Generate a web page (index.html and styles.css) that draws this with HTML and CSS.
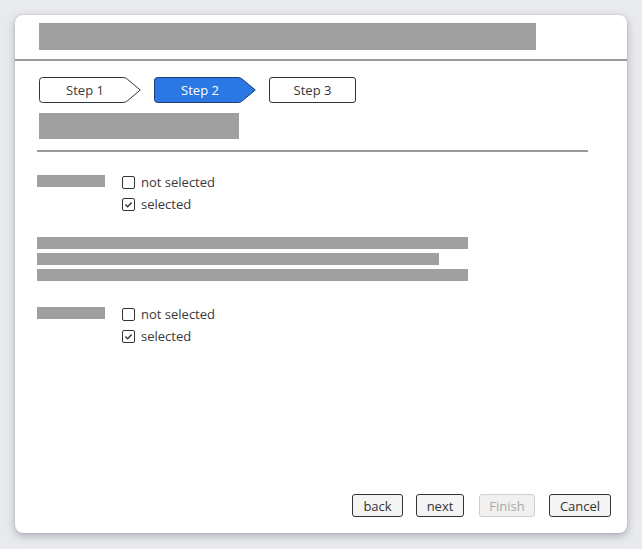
FILE: index.html
```html
<!DOCTYPE html>
<html>
<head>
<meta charset="utf-8">
<link rel="stylesheet" href="styles.css">
</head>
<body>
<div class="window">
  <div class="header">
    <div class="bar title-bar"></div>
  </div>
  <div class="content">
    <div class="steps">
      <div class="step arrow">
        <svg class="step-bg" viewBox="0 0 102 26" width="102" height="26"><path d="M3.5 .5 H84 Q86.5 .5 88.5 2.3 L101.3 13 L88.5 23.7 Q86.5 25.5 84 25.5 H3.5 Q.5 25.5 .5 22.5 V3.5 Q.5 .5 3.5 .5 Z" fill="#fff" stroke="#333" stroke-width="1"/></svg>
        <span class="step-label">Step 1</span>
      </div>
      <div class="step arrow active">
        <svg class="step-bg" viewBox="0 0 102 26" width="102" height="26"><path d="M3.5 .5 H84 Q86.5 .5 88.5 2.3 L101.3 13 L88.5 23.7 Q86.5 25.5 84 25.5 H3.5 Q.5 25.5 .5 22.5 V3.5 Q.5 .5 3.5 .5 Z" fill="#2b77e3" stroke="#1e3f73" stroke-width="1"/></svg>
        <span class="step-label">Step 2</span>
      </div>
      <div class="step last">
        <span class="step-label">Step 3</span>
      </div>
    </div>
    <div class="bar subtitle-bar"></div>
    <div class="divider"></div>

    <div class="field">
      <div class="bar label-bar"></div>
      <div class="options">
        <label class="option"><span class="box"></span>not selected</label>
        <label class="option"><span class="box checked"><svg viewBox="0 0 13 13" width="13" height="13"><path d="M3.4 6.6 L5.6 8.7 L9.6 4.5" fill="none" stroke="#333" stroke-width="1.4"/></svg></span>selected</label>
      </div>
    </div>

    <div class="paragraph">
      <div class="bar line-bar"></div>
      <div class="bar line-bar short"></div>
      <div class="bar line-bar"></div>
    </div>

    <div class="field">
      <div class="bar label-bar"></div>
      <div class="options">
        <label class="option"><span class="box"></span>not selected</label>
        <label class="option"><span class="box checked"><svg viewBox="0 0 13 13" width="13" height="13"><path d="M3.4 6.6 L5.6 8.7 L9.6 4.5" fill="none" stroke="#333" stroke-width="1.4"/></svg></span>selected</label>
      </div>
    </div>
  </div>
  <div class="footer">
    <button class="btn back">back</button>
    <button class="btn next">next</button>
    <button class="btn finish" disabled>Finish</button>
    <button class="btn cancel">Cancel</button>
  </div>
</div>
</body>
</html>
```

FILE: styles.css
```css
html, body {
  margin: 0;
  padding: 0;
}
body {
  background: #e8eaee;
  font-family: "Open Sans", "Noto Sans", sans-serif;
  color: #333;
  width: 642px;
  height: 549px;
  overflow: hidden;
}
.window {
  margin: 15px 0 0 15px;
  width: 612px;
  height: 518px;
  background: #fff;
  border-radius: 8px;
  box-shadow: 0 3px 8px rgba(60, 64, 80, 0.35), 0 0 2px rgba(60, 64, 80, 0.2);
  display: flex;
  flex-direction: column;
  box-sizing: border-box;
}
.bar {
  background: #a0a0a0;
}
.header {
  padding: 8px 24px 9px 24px;
  border-bottom: 2px solid #9a9a9a;
}
.title-bar {
  width: 497px;
  height: 27px;
}
.content {
  flex: 1;
  padding: 16px 0 0 22px;
  display: flex;
  flex-direction: column;
}
.steps {
  display: flex;
  gap: 13px;
  margin-left: 2px;
}
.step {
  position: relative;
  height: 26px;
  display: flex;
  align-items: center;
  justify-content: center;
  font-size: 13px;
  box-sizing: border-box;
}
.step.arrow {
  width: 102px;
  padding-right: 10px;
}
.step-bg {
  position: absolute;
  left: 0;
  top: 0;
}
.step-label {
  position: relative;
  color: #383838;
}
.step.active .step-label {
  color: #fff;
}
.step.last {
  width: 87px;
  border: 1px solid #333;
  border-radius: 3px;
}
.subtitle-bar {
  width: 200px;
  height: 26px;
  margin: 10px 0 0 2px;
}
.divider {
  width: 551px;
  height: 2px;
  background: #9a9a9a;
  margin-top: 11px;
}
.field {
  display: flex;
  gap: 17px;
  margin-top: 23px;
}
.paragraph + .field {
  margin-top: 26px;
}
.label-bar {
  width: 68px;
  height: 12px;
}
.options {
  display: flex;
  flex-direction: column;
  gap: 9px;
  margin-top: 1px;
}
.option {
  display: flex;
  align-items: center;
  gap: 6px;
  height: 13px;
  font-size: 13px;
  color: #383838;
  line-height: 13px;
}
.box {
  width: 13px;
  height: 13px;
  border: 1.5px solid #333;
  border-radius: 2px;
  box-sizing: border-box;
  position: relative;
  flex: none;
}
.box svg {
  position: absolute;
  left: -1.5px;
  top: -1.5px;
}
.paragraph {
  margin-top: 26px;
  display: flex;
  flex-direction: column;
  gap: 4px;
}
.line-bar {
  width: 431px;
  height: 12px;
}
.line-bar.short {
  width: 402px;
}
.footer {
  display: flex;
  justify-content: flex-end;
  gap: 13px;
  padding: 0 16px 16px 0;
}
.btn {
  height: 23px;
  font-family: "Open Sans", "Noto Sans", sans-serif;
  font-size: 13px;
  color: #333;
  background: #f4f4f4;
  border: 1px solid #333;
  border-radius: 3px;
  padding: 0;
  box-sizing: border-box;
}
.btn.back { width: 51px; }
.btn.next { width: 48px; }
.btn.finish {
  width: 56px;
  color: #aaa;
  border-color: #cfcfcf;
  background: #f0f0f0;
  margin-left: 2px;
}
.btn.cancel { width: 62px; margin-left: 1px; }
```
